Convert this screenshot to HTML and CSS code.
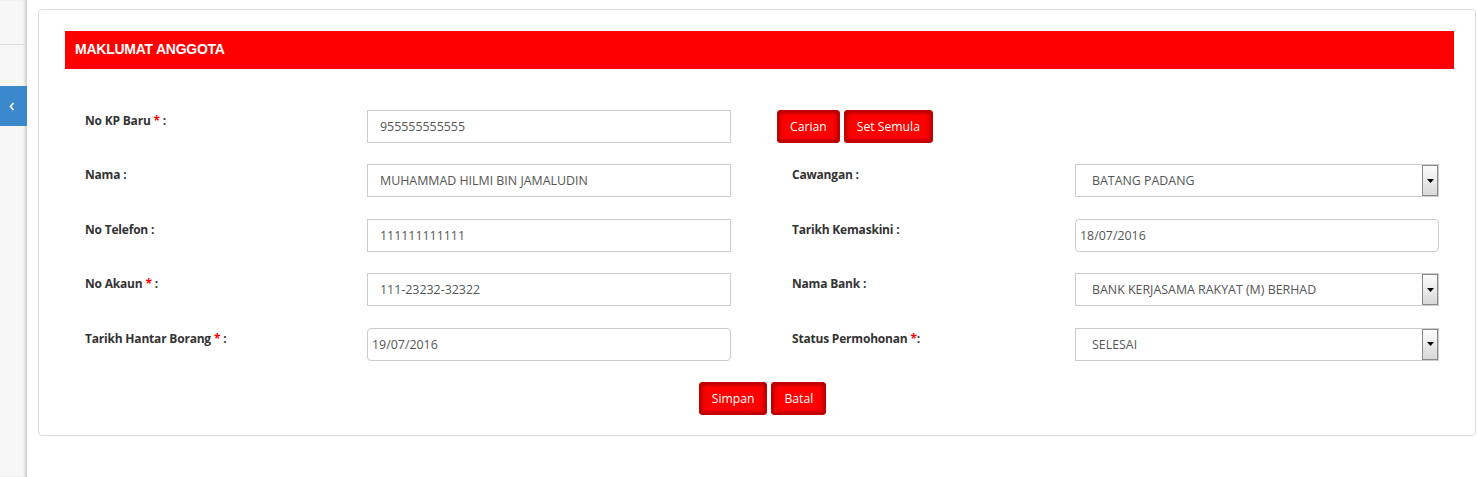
FILE: index.html
```html
<!DOCTYPE html>
<html>
<head>
<meta charset="utf-8">
<link rel="stylesheet" href="styles.css">
</head>
<body>
<aside class="sidebar">
  <div class="sidebar-top"></div>
  <div class="sidebar-tab">
    <svg width="6" height="9" viewBox="0 0 6 9"><path d="M4.5 1 L1.5 4.5 L4.5 8" fill="none" stroke="#fff" stroke-width="1.6"/></svg>
  </div>
</aside>
<main class="content">
  <section class="card">
    <div class="card-header">MAKLUMAT ANGGOTA</div>
    <form class="form">
      <div class="row">
        <label class="label">No KP Baru <span class="req">*</span> :</label>
        <input class="input" type="text" value="955555555555">
        <div class="actions-inline">
          <button type="button" class="btn">Carian</button>
          <button type="button" class="btn">Set Semula</button>
        </div>
      </div>
      <div class="row">
        <label class="label">Nama :</label>
        <input class="input" type="text" value="MUHAMMAD HILMI BIN JAMALUDIN">
        <label class="label label-right">Cawangan :</label>
        <div class="select"><span>BATANG PADANG</span><span class="arrow"><svg width="7" height="4" viewBox="0 0 7 4"><path d="M0 0 H7 L3.5 4 Z" fill="#000"/></svg></span></div>
      </div>
      <div class="row">
        <label class="label">No Telefon :</label>
        <input class="input" type="text" value="111111111111">
        <label class="label label-right">Tarikh Kemaskini :</label>
        <input class="input input-date" type="text" value="18/07/2016">
      </div>
      <div class="row">
        <label class="label">No Akaun <span class="req">*</span> :</label>
        <input class="input" type="text" value="111-23232-32322">
        <label class="label label-right">Nama Bank :</label>
        <div class="select"><span>BANK KERJASAMA RAKYAT (M) BERHAD</span><span class="arrow"><svg width="7" height="4" viewBox="0 0 7 4"><path d="M0 0 H7 L3.5 4 Z" fill="#000"/></svg></span></div>
      </div>
      <div class="row">
        <label class="label">Tarikh Hantar Borang <span class="req">*</span> :</label>
        <input class="input input-date" type="text" value="19/07/2016">
        <label class="label label-right">Status Permohonan <span class="req">*</span>:</label>
        <div class="select"><span>SELESAI</span><span class="arrow"><svg width="7" height="4" viewBox="0 0 7 4"><path d="M0 0 H7 L3.5 4 Z" fill="#000"/></svg></span></div>
      </div>
      <div class="actions">
        <button type="button" class="btn">Simpan</button>
        <button type="button" class="btn">Batal</button>
      </div>
    </form>
  </section>
</main>
</body>
</html>
```
FILE: styles.css
```css
html, body {
  margin: 0;
  padding: 0;
  background: #fff;
  height: 100%;
}
body {
  display: flex;
  font-family: "Open Sans", "Liberation Sans", sans-serif;
  color: #333;
}
.sidebar {
  width: 27px;
  flex: none;
  background: #f7f7f7;
  box-shadow: inset -3px 0 3px -1px rgba(0,0,0,0.18);
  min-height: 477px;
}
.sidebar-top {
  height: 44px;
  border-bottom: 1px solid #dcdcdc;
}
.sidebar-tab {
  margin-top: 41px;
  height: 40px;
  width: 27px;
  background: #3b88cc;
  display: flex;
  align-items: center;
  justify-content: center;
  padding-right: 3px;
  box-sizing: border-box;
}
.content {
  flex: 1;
  padding: 9px 1px 0 11px;
}
.card {
  border: 1px solid #dcdcdc;
  border-radius: 4px;
  padding: 21px 21px 20px 26px;
}
.card-header {
  background: #ff0000;
  height: 38px;
  line-height: 36px;
  padding-left: 10px;
  color: #fff;
  font-family: "Liberation Sans", Arial, sans-serif;
  font-weight: bold;
  font-size: 14px;
  letter-spacing: -0.25px;
}
.form {
  padding: 41px 14px 0 20px;
  display: flex;
  flex-direction: column;
  gap: 21.4px;
}
.row {
  display: flex;
  align-items: flex-start;
  height: 33px;
}
.label {
  width: 282px;
  flex: none;
  font-size: 12px;
  font-weight: bold;
  letter-spacing: -0.2px;
  color: #333;
  padding-top: 2px;
}
.label-right {
  width: 283px;
  margin-left: 61px;
}
.req {
  color: #ff0000;
}
.input {
  width: 364px;
  height: 33px;
  box-sizing: border-box;
  border: 1px solid #cccccc;
  border-radius: 0;
  padding: 0 12px;
  font-family: "Open Sans", "Liberation Sans", sans-serif;
  font-size: 12.4px;
  color: #555;
  background: #fff;
  margin: 0;
  outline: none;
}
.input-date {
  border-radius: 4px;
  padding-left: 4px;
}
.select {
  width: 364px;
  height: 33px;
  box-sizing: border-box;
  border: 1px solid #cccccc;
  display: flex;
  align-items: center;
  justify-content: space-between;
  padding-left: 16px;
  font-size: 12.4px;
  color: #555;
}
.arrow {
  width: 16px;
  height: 31px;
  box-sizing: border-box;
  border: 1px solid #8a8a8a;
  background: linear-gradient(#fdfdfd, #d8d8d8);
  display: flex;
  align-items: center;
  justify-content: center;
}
.actions-inline {
  display: flex;
  gap: 4px;
  margin-left: 46px;
}
.btn {
  height: 33px;
  padding: 0 12px;
  border: 1px solid #c80000;
  border-radius: 3px;
  background: #ff0000;
  box-shadow: inset 0 0 5px 1px #8a0000;
  color: #fff;
  font-family: "Open Sans", "Liberation Sans", sans-serif;
  font-size: 12.2px;
  cursor: pointer;
}
.actions {
  display: flex;
  justify-content: center;
  gap: 4px;
}
```
